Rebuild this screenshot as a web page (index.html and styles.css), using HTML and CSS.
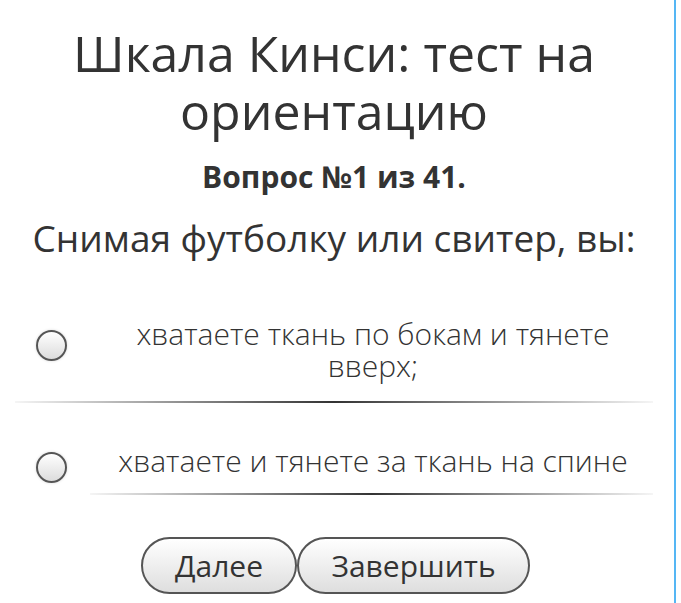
FILE: index.html
```html
<!DOCTYPE html>
<html lang="ru">
<head>
  <meta charset="UTF-8">
  <meta name="viewport" content="width=device-width, initial-scale=1.0">
  <title>Шкала Кинси</title>
  <link rel="stylesheet" href="styles.css">
</head>
<body>
  <div class="page">
    <h1 class="title">Шкала Кинси: тест на ориентацию</h1>
    <h2 class="counter">Вопрос №1 из 41.</h2>
    <p class="question">Снимая футболку или свитер, вы:</p>

    <!-- answers -->
    <label class="answer answer-first">
      <span class="radio"></span>
      <span class="answer-text">хватаете ткань по бокам и тянете вверх;</span>
    </label>
    <div class="divider divider-wide"></div>

    <label class="answer answer-second">
      <span class="radio"></span>
      <span class="answer-text">хватаете и тянете за ткань на спине</span>
    </label>
    <div class="divider divider-short"></div>

    <div class="buttons">
      <button class="btn btn-next">Далее</button>
      <button class="btn btn-finish">Завершить</button>
    </div>
  </div>
</body>
</html>
```

FILE: styles.css
```css
body {
  margin: 0;
  padding: 0;
  font-family: 'Open Sans', 'DejaVu Sans', sans-serif;
  color: #333;
  background-color: #fff;
}
.page {
  width: 676px;
  min-height: 100vh;
  box-sizing: border-box;
  border-right: 2px solid #55b6f4;
  padding: 0 21px 0 15px;
  display: flex;
  flex-direction: column;
}
.title {
  font-size: 50px;
  font-weight: 400;
  line-height: 58px;
  text-align: center;
  margin: 24px 40px 0 40px;
}
.counter {
  font-size: 30px;
  font-weight: 700;
  line-height: 36px;
  text-align: center;
  margin: 19px 0 0 0;
}
.question {
  font-size: 37px;
  line-height: 46px;
  text-align: center;
  margin: 20px 0 0 0;
}
.answer {
  display: flex;
  align-items: center;
}
.answer-first {
  margin-top: 57px;
  margin-bottom: 19px;
}
.answer-second {
  margin-top: 35px;
  margin-bottom: 10px;
}
.radio {
  flex: none;
  width: 27px;
  height: 27px;
  margin-left: 21px;
  margin-right: 26px;
  border: 2px solid #555;
  border-radius: 50%;
  background: linear-gradient(#fff, #dcdcdc);
  box-shadow: 0 0 3px rgba(0, 0, 0, 0.15);
}
.answer-first .radio {
  margin-bottom: 10px;
}
.answer-second .radio {
  margin-top: 14px;
}
.answer-text {
  flex: 1;
  font-size: 30px;
  font-weight: 300;
  line-height: 32px;
  text-align: center;
  padding: 0 10px;
}
.divider {
  height: 2px;
  background: linear-gradient(to right, rgba(0, 0, 0, 0.04), #333, rgba(0, 0, 0, 0.04));
}
.divider-short {
  margin-left: 75px;
}
.buttons {
  display: flex;
  justify-content: center;
  margin-top: 42px;
  margin-left: 3px;
}
.btn {
  height: 57px;
  box-sizing: border-box;
  border: 2px solid #555;
  border-radius: 30px;
  background: linear-gradient(#fff, #dedede);
  font-family: 'Open Sans', 'DejaVu Sans', sans-serif;
  font-size: 30px;
  font-weight: 400;
  color: #333;
  padding: 0 20px;
}
.btn-next {
  width: 156px;
}
.btn-finish {
  width: 233px;
}
```
